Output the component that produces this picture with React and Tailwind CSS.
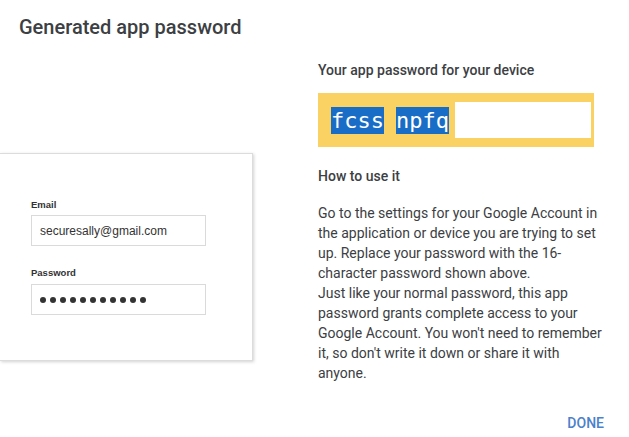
import React from "react";

export default function App() {
  const dots = Array.from({ length: 11 });
  return (
    <div className="w-[629px] h-[437px] bg-white overflow-hidden font-['Roboto',sans-serif] text-[#3c4043]">
      <h1 className="pl-[19px] pt-[13px] text-[20px] leading-[28px] font-medium text-[#3c4043]">
        Generated app password
      </h1>
      <div className="flex mt-[19px]">
        <div className="w-[318px] pt-[93px]">
          <div className="w-[253px] h-[208px] bg-white border border-l-0 border-[#dcdcdc] shadow-[1px_1px_3px_rgba(0,0,0,0.18)] pt-[45px] pl-[31px] font-['Liberation_Sans',Arial,sans-serif]">
            <div className="text-[9.5px] leading-[12px] font-bold text-[#333]">Email</div>
            <div className="mt-[4px] w-[175px] h-[31px] border border-[#dadada] flex items-center pl-[8px] text-[12px] text-[#333]">
              securesally@gmail.com
            </div>
            <div className="mt-[21px] text-[9.5px] leading-[12px] font-bold text-[#333]">Password</div>
            <div className="mt-[5px] w-[175px] h-[31px] border border-[#dadada] flex items-center pl-[8px] gap-[4px]">
              {dots.map((_, i) => (
                <span key={i} className="w-[6px] h-[6px] rounded-full bg-[#333]" />
              ))}
            </div>
          </div>
        </div>
        <div className="w-[293px]">
          <p className="text-[14px] leading-[20px] font-medium text-[#3c4043]">
            Your app password for your device
          </p>
          <div className="mt-[13px] w-[276px] h-[54px] bg-[#fad264] flex items-center pl-[13px] pr-[3px]">
            <span className="bg-[#1a6dc6] text-white font-['DejaVu_Sans_Mono',monospace] text-[22px] leading-[27px]">fcss</span>
            <span className="ml-[12px] bg-[#1a6dc6] text-white font-['DejaVu_Sans_Mono',monospace] text-[22px] leading-[27px]">npfq</span>
            <div className="ml-[6px] flex-1 h-[36px] bg-white" />
          </div>
          <p className="mt-[19px] text-[14px] leading-[20px] font-medium text-[#3c4043]">How to use it</p>
          <div className="mt-[17px] text-[14px] leading-[20px] text-[#3c4043]">
            <p>
              Go to the settings for your Google Account in the application or device you are trying to set up. Replace your password with the 16-character password shown above.
            </p>
            <p>
              Just like your normal password, this app password grants complete access to your Google Account. You won't need to remember it, so don't write it down or share it with anyone.
            </p>
          </div>
          <div className="mt-[30px] flex justify-end pr-[7px]">
            <span className="text-[14px] leading-[20px] font-medium text-[#4a80cc]">DONE</span>
          </div>
        </div>
      </div>
    </div>
  );
}
